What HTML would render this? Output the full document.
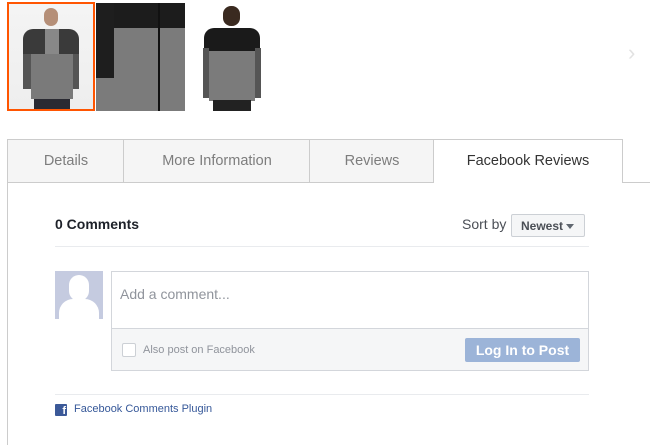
<!DOCTYPE html>
<html><head><style>
body{margin:0;width:650px;height:445px;background:#fff;position:relative;overflow:hidden;font-family:"Liberation Sans",Arial,sans-serif}
.a{position:absolute}
.tab{position:absolute;top:139px;height:42px;background:#f5f5f5;border:1px solid #ccc;border-right:none;color:#7d7d7d;font-size:14.5px;line-height:42px;text-align:center;box-sizing:content-box}
</style></head><body>
<!-- thumbnails -->
<div class="a" style="left:7px;top:2px;width:84px;height:105px;border:2px solid #ff5501;background:linear-gradient(#f4f4f4,#eee)">
 <div class="a" style="left:35px;top:4px;width:14px;height:18px;border-radius:7px;background:#b58f78"></div>
 <div class="a" style="left:14px;top:25px;width:56px;height:30px;background:#3a3a3a;border-radius:10px 10px 0 0"></div>
 <div class="a" style="left:36px;top:25px;width:14px;height:25px;background:#888"></div>
 <div class="a" style="left:22px;top:50px;width:42px;height:45px;background:#7a7a7a"></div>
 <div class="a" style="left:14px;top:50px;width:8px;height:35px;background:#555"></div>
 <div class="a" style="left:64px;top:50px;width:6px;height:35px;background:#555"></div>
 <div class="a" style="left:25px;top:95px;width:36px;height:10px;background:#2a2a32"></div>
</div>
<div class="a" style="left:96px;top:3px;width:89px;height:108px;background:#7b7b7b">
 <div class="a" style="left:0;top:0;width:89px;height:25px;background:#1c1c1c"></div>
 <div class="a" style="left:0;top:0;width:18px;height:75px;background:#1e1e1e"></div>
 <div class="a" style="left:62px;top:0;width:2px;height:108px;background:#111"></div>
</div>
<div class="a" style="left:187px;top:3px;width:88px;height:108px;background:#fff">
 <div class="a" style="left:36px;top:3px;width:17px;height:20px;border-radius:8px;background:#3a2a20"></div>
 <div class="a" style="left:17px;top:25px;width:56px;height:24px;background:#1a1a1a;border-radius:10px 10px 0 0"></div>
 <div class="a" style="left:22px;top:48px;width:46px;height:50px;background:#7b7b7b"></div>
 <div class="a" style="left:16px;top:45px;width:6px;height:50px;background:#555"></div>
 <div class="a" style="left:68px;top:45px;width:6px;height:50px;background:#555"></div>
 <div class="a" style="left:26px;top:97px;width:38px;height:11px;background:#222"></div>
</div>
<div class="a" style="left:628px;top:40px;color:#e2e2e2;font-size:22px">&#8250;</div>
<!-- tabs -->
<div class="tab" style="left:7px;width:116px">Details</div>
<div class="tab" style="left:123px;width:186px">More Information</div>
<div class="tab" style="left:309px;width:124px">Reviews</div>
<div class="tab" style="left:433px;width:188px;background:#fff;height:43px;border-bottom:none;border-right:1px solid #ccc;color:#333">Facebook Reviews</div>
<div class="a" style="left:622px;top:182px;width:28px;height:1px;background:#ccc"></div>
<div class="a" style="left:7px;top:182px;width:1px;height:263px;background:#ccc"></div>
<!-- comments -->
<div class="a" style="left:55px;top:216px;font-size:14px;font-weight:bold;color:#1d2129">0 Comments</div>
<div class="a" style="left:462px;top:216px;font-size:14px;color:#4b4f56">Sort by</div>
<div class="a" style="left:511px;top:214px;height:23px;border:1px solid #ccd0d5;background:#f5f6f7;border-radius:2px;font-size:12px;font-weight:bold;color:#4b4f56;line-height:23px;padding-left:9px;box-sizing:border-box;width:74px">Newest <span style="display:inline-block;border:4px solid transparent;border-top:5px solid #606770;vertical-align:-3px"></span></div>
<div class="a" style="left:55px;top:246px;width:534px;height:1px;background:#e9ebee"></div>
<div class="a" style="left:55px;top:271px;width:48px;height:48px;background:#c5cbe0;overflow:hidden">
 <div class="a" style="left:14px;top:4px;width:20px;height:26px;border-radius:10px;background:#fff"></div>
 <div class="a" style="left:4px;top:28px;width:40px;height:30px;border-radius:14px 14px 0 0;background:#fff"></div>
</div>
<div class="a" style="left:111px;top:271px;width:476px;height:98px;border:1px solid #d3d6db;background:#f5f6f7">
 <div class="a" style="left:0;top:0;width:476px;height:56px;background:#fff;border-bottom:1px solid #d3d6db"></div>
 <div class="a" style="left:8px;top:14px;font-size:14px;color:#90949c">Add a comment...</div>
 <div class="a" style="left:10px;top:71px;width:12px;height:12px;border:1px solid #ccd0d5;border-radius:2px;background:#fff"></div>
 <div class="a" style="left:31px;top:72px;font-size:11px;color:#90949c">Also post on Facebook</div>
 <div class="a" style="left:353px;top:66px;width:115px;height:24px;background:#9cb4d8;border-radius:2px;color:#fff;font-weight:bold;font-size:14px;line-height:24px;text-align:center">Log In to Post</div>
</div>
<div class="a" style="left:55px;top:394px;width:534px;height:1px;background:#e9ebee"></div>
<div class="a" style="left:55px;top:404px;width:12px;height:12px;background:#3b5998;border-radius:1px;color:#fff;font-weight:bold;font-size:11px;line-height:14px;text-align:right;overflow:hidden"><span style="margin-right:1px">f</span></div>
<div class="a" style="left:74px;top:403px;font-size:11px;color:#365899">Facebook Comments Plugin</div>
</body></html>
